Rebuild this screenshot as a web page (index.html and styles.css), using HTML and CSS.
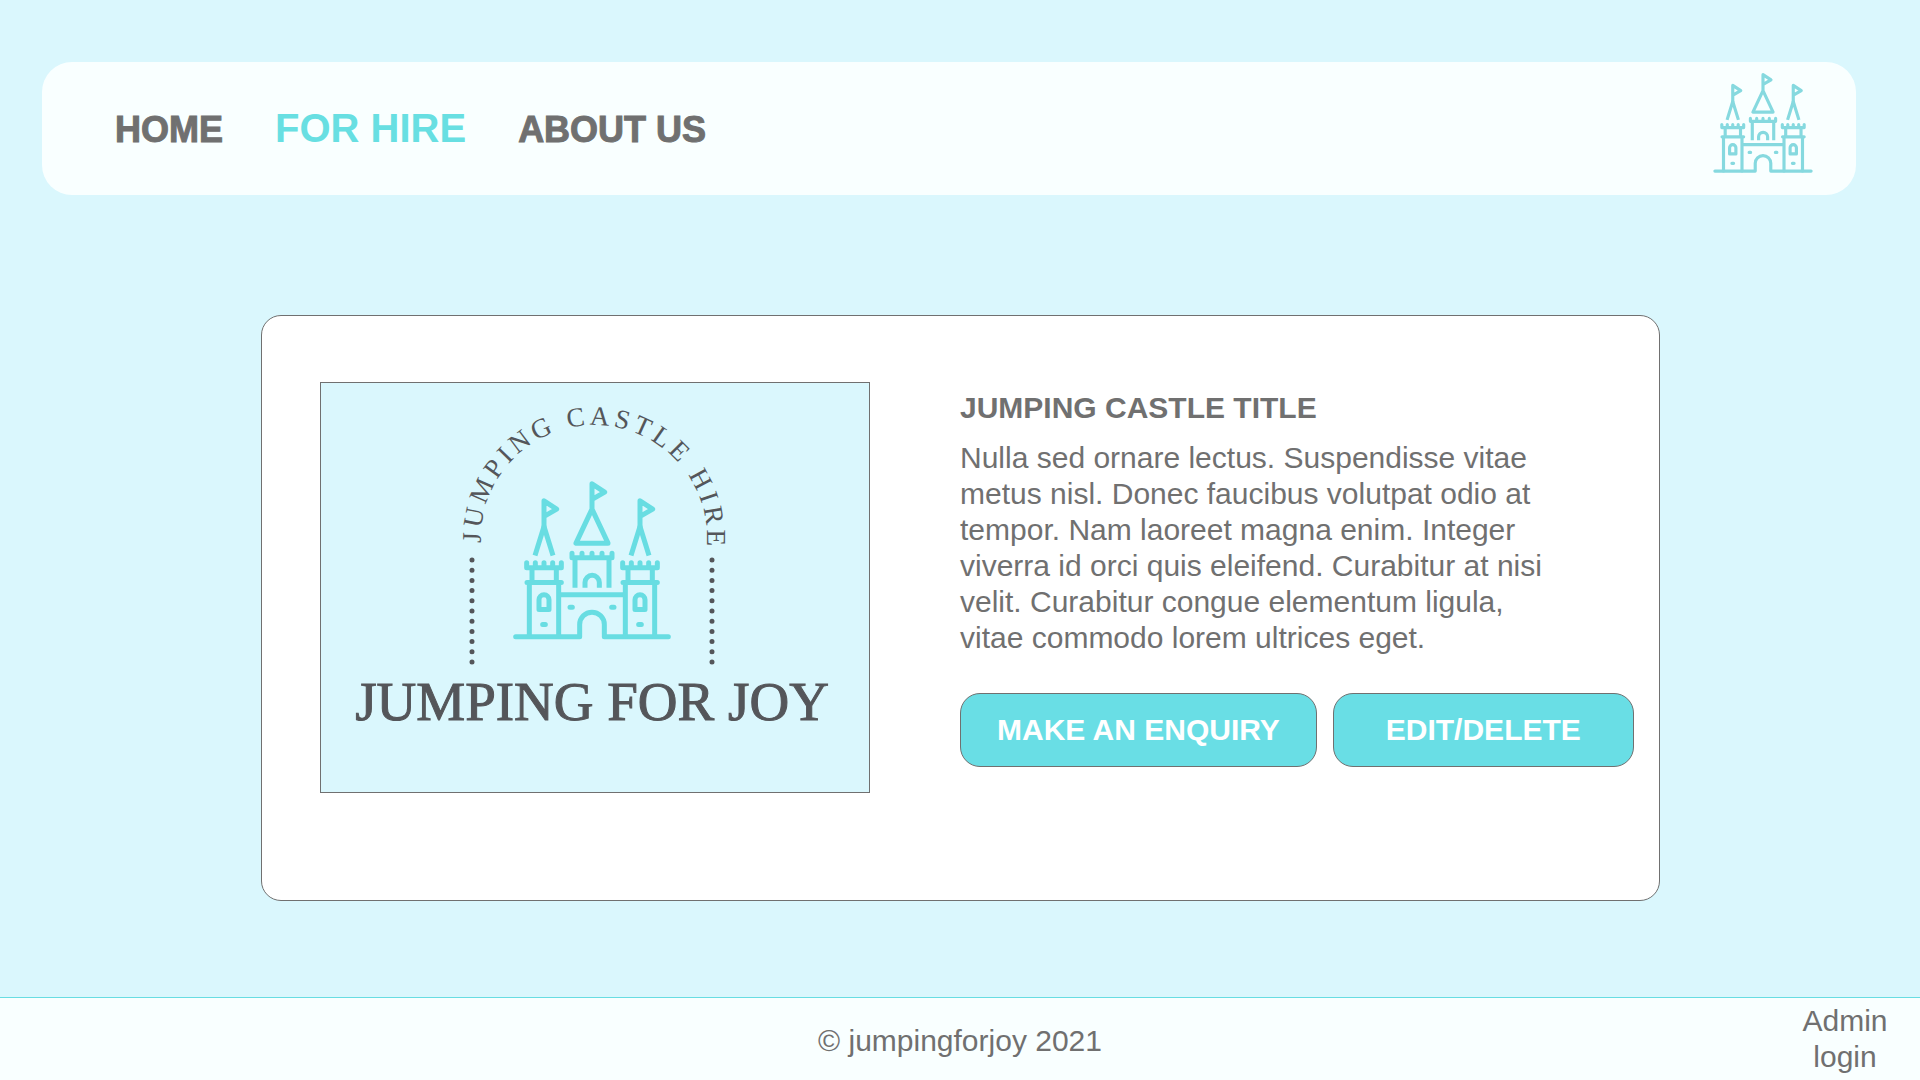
FILE: index.html
```html
<!DOCTYPE html>
<html lang="en">
<head>
<meta charset="utf-8">
<meta name="viewport" content="width=device-width, initial-scale=1">
<title>Jumping for Joy – For hire</title>
<link rel="stylesheet" href="styles.css">
</head>
<body>
<svg class="sprite" aria-hidden="true">
  <symbol id="castle" viewBox="40 34 474 476">
    <g fill="none" stroke="currentColor" stroke-width="15" stroke-linecap="round" stroke-linejoin="round">
      <!-- ground and gate -->
      <path d="M48 501H240V464A37 37 0 0 1 314 464V501H506"/>
      <!-- wall -->
      <path d="M183 375H371M211 412H218M336 412H343"/>
      <!-- keep -->
      <path stroke-linecap="butt" d="M226 264V354M328 264V354M256 354V338A21 21 0 0 1 299 338V354"/>
      <path d="M217 250V264H337V250M247 250V262M277 250V262M307 250V262"/>
      <path d="M277 118L229 220H325ZM277 118V42L315 67L280 87"/>
      <!-- towers -->
      <g id="tower">
        <path d="M89 340V500M177 340V500M82 338H185M97 296V336M170 296V336"/>
        <path d="M81 279V294H185V279M107 279V292M133 279V292M159 279V292"/>
        <path stroke-linecap="butt" d="M106 257L133 170L160 257"/>
        <path d="M133 172V93L171 118L136 138"/>
        <path d="M118 419V390A15 15 0 0 1 148 390V419ZM129 464H137"/>
      </g>
      <use href="#tower" x="288"/>
    </g>
  </symbol>
</svg>

<header class="site-header">
  <nav class="nav" aria-label="Main">
    <a class="nav-link" href="#home">HOME</a>
    <a class="nav-link nav-link-active" href="#hire" aria-current="page">FOR HIRE</a>
    <a class="nav-link" href="#about">ABOUT US</a>
  </nav>
  <a class="logo" href="#home" aria-label="Jumping for Joy"><svg class="logo-icon"><use href="#castle"/></svg></a>
</header>

<main class="main">
  <article class="card">
    <svg class="picture" viewBox="0 0 548 409" role="img" aria-label="Jumping for Joy, jumping castle hire">
      <path id="arch" fill="none" d="M160 160V155A113 113 0 0 1 386 155V175"/>
      <text class="arch-text"><textPath href="#arch">JUMPING CASTLE HIRE</textPath></text>
      <path class="dots" d="M151 177V280M391 177V280"/>
      <use class="picture-castle" href="#castle" x="192" y="98" width="158" height="159"/>
      <text class="brand-text" x="271" y="337">JUMPING FOR JOY</text>
    </svg>
    <div class="details">
      <h1 class="title">JUMPING CASTLE TITLE</h1>
      <p class="description">Nulla sed ornare lectus. Suspendisse vitae metus nisl. Donec faucibus volutpat odio at tempor. Nam laoreet magna enim. Integer viverra id orci quis eleifend. Curabitur at nisi velit. Curabitur congue elementum ligula, vitae commodo lorem ultrices eget.</p>
      <div class="actions">
        <button class="button" type="button">MAKE AN ENQUIRY</button>
        <button class="button" type="button">EDIT/DELETE</button>
      </div>
    </div>
  </article>
</main>

<footer class="footer">
  <p class="copyright">© jumpingforjoy 2021</p>
  <a class="admin-link" href="#admin">Admin login</a>
</footer>
</body>
</html>
```
FILE: styles.css
```css
* {
  box-sizing: border-box;
}

body {
  display: flex;
  flex-direction: column;
  min-height: 100vh;
  margin: 0;
  background: #daf7fd;
  color: #707070;
  font-family: "Liberation Sans", Arial, sans-serif;
  font-size: 30px;
  line-height: 36px;
}

.sprite {
  position: absolute;
  width: 0;
  height: 0;
}

.site-header {
  display: flex;
  align-items: center;
  justify-content: space-between;
  margin: 62px 64px 0 42px;
  padding: 11px 43px 22px 73px;
  border-radius: 30px;
  background: #f9ffff;
}

.nav {
  display: flex;
  align-items: baseline;
  gap: 52px;
  padding-top: 12px;
}

.nav-link {
  color: #707070;
  font-size: 36px;
  font-weight: bold;
  text-decoration: none;
  -webkit-text-stroke: 1px currentColor;
}

.nav-link-active {
  color: #68dfe2;
  font-size: 40px;
  -webkit-text-stroke: 0;
}

.logo {
  display: flex;
  color: #86d9df;
}

.logo-icon {
  width: 100px;
  height: 100px;
}

.main {
  flex: 1;
  padding: 120px 260px 96px 261px;
}

.card {
  display: grid;
  grid-template-columns: minmax(0, 550px) 1fr;
  align-items: start;
  gap: 90px;
  padding: 66px 24px 107px 58px;
  border: 1px solid #707070;
  border-radius: 20px;
  background: #fff;
}

.picture {
  width: 100%;
  border: 1px solid #707070;
  background: #daf7fd;
}

.picture-castle {
  color: #68dde2;
}

.arch-text,
.brand-text {
  fill: #54565a;
  font-family: "Liberation Serif", "Times New Roman", serif;
}

.arch-text {
  font-size: 27px;
  letter-spacing: 4px;
}

.brand-text {
  font-size: 55px;
  text-anchor: middle;
  stroke: #54565a;
  stroke-width: 1px;
}

.dots {
  fill: none;
  stroke: #54565a;
  stroke-width: 5;
  stroke-linecap: round;
  stroke-dasharray: 0 10.2;
}

.details {
  padding-top: 8px;
}

.title {
  margin: 0 0 14px;
  font-size: 30px;
}

.description {
  max-width: 600px;
  margin: 0 0 37px;
}

.actions {
  display: flex;
  gap: 16px;
}

.button {
  min-width: 301px;
  height: 74px;
  padding: 0 36px;
  border: 1px solid #707070;
  border-radius: 20px;
  background: #69dee5;
  color: #fff;
  font: inherit;
  font-weight: bold;
  white-space: nowrap;
}

.footer {
  display: grid;
  grid-template-columns: 1fr auto 1fr;
  align-items: center;
  padding: 5px 20px;
  border-top: 1px solid #68dde2;
  background: #f9ffff;
}

.copyright {
  grid-column: 2;
  margin: 0;
  padding-top: 4px;
}

.admin-link {
  justify-self: end;
  width: 110px;
  color: inherit;
  text-align: center;
  text-decoration: none;
}
```
